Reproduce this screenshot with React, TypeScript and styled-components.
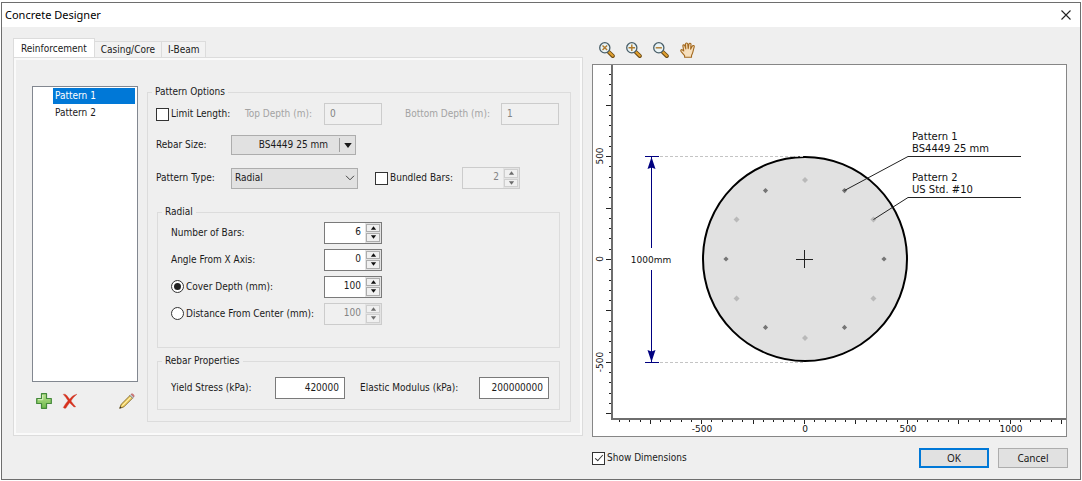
import React, { useState } from "react";
import styled, { createGlobalStyle, css } from "styled-components";

const uiFont = `"DejaVu Sans Condensed", Tahoma, sans-serif`;
const titleFont = `"Noto Sans", "Segoe UI", sans-serif`;

const GlobalStyle = createGlobalStyle`
  *, *::before, *::after { box-sizing: border-box; }
  body { margin: 0; background: #fff; }
  button, input, select, fieldset, legend { font: inherit; color: inherit; margin: 0; }
`;

/* ---------- window frame ---------- */

const Page = styled.div`
  padding: 2px 1px 1px;
`;

const Dialog = styled.main`
  border: 1px solid #6e6e6e;
  background: #efefef;
  font: 10px/14px ${uiFont};
  color: #1a1a1a;
`;

const TitleBar = styled.header`
  display: flex;
  align-items: center;
  justify-content: space-between;
  height: 24px;
  padding: 0 6px 0 3px;
  background: #fff;
`;

const Title = styled.h1`
  margin: 0;
  font: 11px/16px ${titleFont};
  color: #000;
`;

const IconButton = styled.button`
  display: block;
  width: 16px;
  height: 16px;
  padding: 0;
  border: 0;
  background: none;

  svg { display: block; }
`;

const Body = styled.div`
  display: grid;
  grid-template-columns: minmax(570px, 6fr) minmax(0, 5fr);
  gap: 9px;
  padding: 11px 13px 11px 11px;
`;

/* ---------- tabs ---------- */

const TabColumn = styled.div`
  display: flex;
  flex-direction: column;
`;

const TabStrip = styled.div`
  display: flex;
  align-items: flex-end;
  height: 19px;
`;

const Tab = styled.button<{ $active?: boolean }>`
  height: 16px;
  padding: 0 6px;
  border: 1px solid #dcdcdc;
  border-left-width: 0;
  border-bottom: 0;
  background: #f2f2f2;
  line-height: 14px;
  white-space: nowrap;

  ${(p) =>
    p.$active &&
    css`
      height: 20px;
      margin-bottom: -1px;
      padding: 0 7px;
      border-left-width: 1px;
      background: #fff;
      line-height: 16px;
    `}
`;

const TabPanel = styled.section`
  display: flex;
  gap: 9px;
  height: 379px;
  padding: 27px 11px 13px 16px;
  border: 1px solid #dcdcdc;
  box-shadow: inset 0 0 0 2px #fafafa;
`;

/* ---------- pattern list ---------- */

const ListColumn = styled.div`
  display: flex;
  flex-direction: column;
  width: 106px;
  margin-left: 2px;
  padding-top: 1px;
`;

const PatternList = styled.ul`
  display: flex;
  flex-direction: column;
  gap: 1px;
  height: 296px;
  margin: 0;
  padding: 1px 2px 1px 20px;
  border: 1px solid #828790;
  background: #fff;
  list-style: none;
`;

const PatternItem = styled.button<{ $selected: boolean }>`
  display: block;
  width: 100%;
  height: 16px;
  padding: 0 2px;
  border: 0;
  background: ${(p) => (p.$selected ? "#0078d7" : "transparent")};
  color: ${(p) => (p.$selected ? "#fff" : "#1a1a1a")};
  text-align: left;
  line-height: 16px;
`;

const ListActions = styled.div`
  display: flex;
  gap: 10px;
  padding: 11px 3px 0 4px;

  button:last-child { margin-left: auto; }
`;

/* ---------- form parts ---------- */

const Group = styled.fieldset`
  min-width: 0;
  padding: 0;
  border: 1px solid #dcdcdc;
`;

const OptionsGroup = styled(Group)`
  flex: 1;
  padding: 2px 10px 0 8px;
`;

const Legend = styled.legend`
  margin-left: -4px;
  padding: 0 3px;
`;

const NestedGroup = styled(Group)`
  margin-left: 1px;

  > ${Legend} { margin-left: -9px; }
`;

const RadialGroup = styled(NestedGroup)`
  margin-top: 12px;
  padding: 0 10px 20px 13px;
`;

const PropertiesGroup = styled(NestedGroup)`
  margin-top: 6px;
  padding: 6px 10px 7px 13px;
`;

const Row = styled.div<{ $height: number }>`
  display: flex;
  align-items: center;
  height: ${(p) => p.$height}px;
`;

const FormGrid = styled.div`
  display: grid;
  grid-template-columns: 153px 58px;
  grid-auto-rows: 27px;
  align-items: center;
`;

const Label = styled.label<{ $width?: number; $muted?: boolean }>`
  flex: none;
  width: ${(p) => (p.$width ? `${p.$width}px` : "auto")};
  color: ${(p) => (p.$muted ? "#a3a3a3" : "inherit")};
  white-space: nowrap;
`;

const BottomDepthLabel = styled(Label)`
  margin-left: 23px;
`;

const ModulusLabel = styled(Label)`
  margin-left: 15px;
`;

const Choice = styled.label<{ $width?: number }>`
  display: flex;
  flex: none;
  align-items: center;
  gap: 2px;
  width: ${(p) => (p.$width ? `${p.$width}px` : "auto")};
  white-space: nowrap;
`;

const CheckBox = styled.input.attrs({ type: "checkbox" })`
  appearance: none;
  display: grid;
  place-items: center;
  flex: none;
  width: 13px;
  height: 13px;
  border: 1px solid #333;
  background: #fff;

  &:checked::after {
    content: "";
    width: 4px;
    height: 8px;
    margin-bottom: 2px;
    border: solid #333;
    border-width: 0 1px 1px 0;
    transform: rotate(42deg);
  }
`;

const Radio = styled.input.attrs({ type: "radio" })`
  appearance: none;
  display: grid;
  place-items: center;
  flex: none;
  width: 13px;
  height: 13px;
  border: 1px solid #333;
  border-radius: 50%;
  background: #fff;

  &:checked::after {
    content: "";
    width: 7px;
    height: 7px;
    border-radius: 50%;
    background: #222;
  }
`;

const TextBox = styled.input<{ $width: number; $right?: boolean }>`
  flex: none;
  width: ${(p) => p.$width}px;
  height: 22px;
  padding: 0 5px 2px;
  border: 1px solid #7a7a7a;
  border-radius: 0;
  background: #fff;
  text-align: ${(p) => (p.$right ? "right" : "left")};

  &:disabled {
    border-color: #cccccc;
    background: #f0f0f0;
    color: #838383;
  }
`;

const SpinFrame = styled.div<{ $disabled?: boolean }>`
  display: flex;
  flex: none;
  width: 58px;
  height: 22px;
  border: 1px solid ${(p) => (p.$disabled ? "#cccccc" : "#7a7a7a")};
  background: ${(p) => (p.$disabled ? "#f0f0f0" : "#fff")};
`;

const SpinInput = styled.input`
  flex: 1;
  min-width: 0;
  padding: 0 4px 2px 0;
  border: 0;
  background: none;
  text-align: right;

  &:disabled { color: #838383; }
`;

const SpinButtons = styled.div`
  display: grid;
  grid-template-rows: 1fr 1fr;
  gap: 1px;
  width: 16px;
  padding: 1px;
  background: #e3e3e3;
`;

const SpinButton = styled.button`
  display: grid;
  place-items: center;
  min-height: 0;
  padding: 0;
  border: 1px solid #adadad;
  background: #f0f0f0;
  color: #111;

  &:disabled {
    border-color: #cfcfcf;
    color: #6d6d6d;
  }
`;

const MenuButton = styled.button`
  display: grid;
  grid-template-columns: 1fr 15px;
  align-items: center;
  width: 125px;
  height: 20px;
  padding: 0;
  border: 1px solid #adadad;
  background: #e1e1e1;

  span {
    padding-right: 11px;
    border-right: 1px solid #a0a0a0;
    text-align: right;
  }

  svg { justify-self: center; }
`;

const SelectFrame = styled.div`
  display: grid;
  flex: none;
  align-items: center;
  width: 127px;
  margin-right: 17px;

  > * { grid-area: 1 / 1; }

  svg {
    justify-self: end;
    margin-right: 3px;
    pointer-events: none;
  }
`;

const Select = styled.select`
  appearance: none;
  height: 21px;
  padding: 0 3px;
  border: 1px solid #adadad;
  border-radius: 0;
  background: #e1e1e1;
`;

/* ---------- preview ---------- */

const PreviewColumn = styled.section`
  display: flex;
  flex-direction: column;
  min-width: 0;
`;

const Toolbar = styled.div`
  display: flex;
  gap: 11px;
  height: 26px;
  padding: 4px 7px;
`;

const PlotFrame = styled.div`
  border: 1px solid #868686;
  background: #fff;

  svg {
    display: block;
    width: 100%;
    height: auto;
  }
`;

const Footer = styled.footer`
  display: flex;
  align-items: center;
  gap: 9px;
  margin: 11px -1px 0 0;

  > label { margin-right: auto; }
`;

const PushButton = styled.button<{ $primary?: boolean }>`
  width: 70px;
  height: 20px;
  padding: 0;
  border: ${(p) => (p.$primary ? "2px solid #0078d7" : "1px solid #adadad")};
  background: #e1e1e1;
  font-family: ${titleFont};
`;

/* ---------- icons ---------- */

const Caret = ({ up, width = 7, height = 4 }: { up?: boolean; width?: number; height?: number }) => (
  <svg width={width} height={height} viewBox="0 0 8 4" aria-hidden="true">
    <path d={up ? "M1 4 4 0 7 4z" : "M1 0h6L4 4z"} fill="currentColor" />
  </svg>
);

const Magnifier = ({ sign }: { sign: string }) => (
  <svg width="16" height="16" viewBox="0 0 16 16" aria-hidden="true">
    <path d="M9.6 9.8 13.8 14" stroke="#6b4a14" strokeWidth="4" strokeLinecap="round" />
    <path d="M10.2 10.2 13.8 13.8" stroke="#e0a030" strokeWidth="2.2" strokeLinecap="round" />
    <circle cx="5.8" cy="5.8" r="5.1" fill="#eaf4f6" stroke="#4a5f69" strokeWidth="1.3" />
    <path d={sign} stroke="#b07a2c" strokeWidth="1.4" fill="none" />
  </svg>
);

const Hand = () => (
  <svg width="16" height="16" viewBox="0 0 16 16" aria-hidden="true">
    <path
      d="M4.6 15.3v-1.6L1.2 9.6C.2 8.2 1.3 7.1 2.6 8l1.2 1L2.900 4.200C2.600 2.700 4.300 2.300 4.800 3.700l1 3.200-.3-4.700C5.500.6 7.500.5 7.700 2l.5 4.700.7-4.500c.3-1.500 2.200-1.200 2.100.3l-.4 4.700 1.700-3.100c.7-1.200 2.300-.5 1.900.8-.6 2-.9 3.900-1.500 5.800-.4 1.200-.9 1.900-1.200 2.900v1.700z"
      fill="#f6dfbd"
      stroke="#a3691f"
      strokeWidth="1.1"
      strokeLinejoin="round"
    />
  </svg>
);

const PlusIcon = () => (
  <svg width="16" height="16" viewBox="0 0 16 16" aria-hidden="true">
    <defs>
      <linearGradient id="plusFill" x1="0" y1="0" x2="0" y2="1">
        <stop offset="0" stopColor="#b9e08f" />
        <stop offset="1" stopColor="#6fbb4c" />
      </linearGradient>
    </defs>
    <path
      d="M5.500.7h5v4.800h4.800v5h-4.800v4.800h-5v-4.800H.7v-5h4.800z"
      fill="url(#plusFill)"
      stroke="#44893a"
      strokeWidth="1.2"
      strokeLinejoin="round"
    />
    <path d="M6.700 2v4.700H2" stroke="#dcf2c4" fill="none" />
  </svg>
);

const DeleteIcon = () => (
  <svg width="16" height="16" viewBox="0 0 16 16" aria-hidden="true">
    <path
      d="M1.200 1.300C3 .8 4 1.400 5.200 3.100L7.600 6.200C9.500 3.800 11.600 1.800 15 1.200 12.700 3 10.500 5.300 9 8c1.500 2 3 4 4.700 5.800-1.400.5-2.200 0-3-1L7.600 9.700C6.200 11.700 4.900 13.500 3.800 15.200c-1 .3-1.900 0-2.500-.8C2.600 12 4.200 9.800 6 7.700 4.600 5.400 3 3.200 1.200 1.300z"
      fill="#d9301c"
      stroke="#c8483a"
      strokeWidth=".4"
    />
  </svg>
);

const PencilIcon = () => (
  <svg width="16" height="16" viewBox="0 0 16 16" aria-hidden="true">
    <path d="M.7 15.300 2.200 11.300 11 2.500l2.600 2.600-8.800 8.800z" fill="#f3d56b" stroke="#7d6225" strokeWidth=".9" strokeLinejoin="round" />
    <path d="M3.300 12.700 12.200 3.700" stroke="#fff0b0" strokeWidth="1" />
    <path d="M11 2.500 12.200 1.300 14.800 3.900 13.600 5.100z" fill="#c9ced2" stroke="#80868a" strokeWidth=".6" />
    <path d="M12.200 1.300c1-1.400 3.800.9 2.600 2.600z" fill="#e08080" stroke="#b35a5a" strokeWidth=".6" />
    <path d="M.5 15.500 1.200 13.400 2.600 14.800z" fill="#333" />
  </svg>
);

const CloseIcon = () => (
  <svg width="16" height="16" viewBox="0 0 16 16" aria-hidden="true">
    <path d="M3.500 3.500l9 9m0-9l-9 9" stroke="#222" strokeWidth="1.100" />
  </svg>
);

/* ---------- spinner ---------- */

type SpinnerProps = { id: string; label?: string; value: number; disabled?: boolean };

const Spinner = ({ id, label, value, disabled }: SpinnerProps) => {
  const [current, setCurrent] = useState(value);
  return (
    <SpinFrame $disabled={disabled}>
      <SpinInput
        id={id}
        aria-label={label}
        value={current}
        disabled={disabled}
        onChange={(e) => setCurrent(Number(e.target.value) || 0)}
      />
      <SpinButtons>
        <SpinButton type="button" aria-label="Increase" disabled={disabled} onClick={() => setCurrent(current + 1)}>
          <Caret up />
        </SpinButton>
        <SpinButton type="button" aria-label="Decrease" disabled={disabled} onClick={() => setCurrent(current - 1)}>
          <Caret />
        </SpinButton>
      </SpinButtons>
    </SpinFrame>
  );
};

/* ---------- cross-section drawing ---------- */

// The drawing's origin is the pile centre; SCALE is pixels per millimetre.
const SCALE = 0.2056;
const PILE_RADIUS = 102;
const BAR_RADIUS = 79;

const range = (from: number, to: number, step: number) =>
  Array.from({ length: Math.floor((to - from) / step) + 1 }, (_, i) => from + i * step);

const PlotText = styled.text`
  font-family: "DejaVu Sans", Verdana, sans-serif;
  font-size: 9px;
  fill: #111;
`;

const CalloutText = styled(PlotText)`
  font-size: 10px;
`;

const BarRing = ({ start, size, color }: { start: number; size: number; color: string }) => (
  <g fill={color}>
    {range(start, start + 300, 60).map((deg) => {
      const a = (deg * Math.PI) / 180;
      const x = BAR_RADIUS * Math.cos(a);
      const y = -BAR_RADIUS * Math.sin(a);
      return (
        <path key={deg} d={`M${x - size} ${y}L${x} ${y - size}L${x + size} ${y}L${x} ${y + size}z`} />
      );
    })}
  </g>
);

const Plot = ({ dimensions }: { dimensions: boolean }) => (
  <svg viewBox="-212 -194 473 371" role="img" aria-label="Pile cross-section">
    <circle r={PILE_RADIUS} fill="#e1e1e1" stroke="#000" strokeWidth="2" />

    <BarRing start={0} size={2.6} color="#757575" />
    <BarRing start={30} size={3} color="#b9b9b9" />

    <g stroke="#222" shapeRendering="crispEdges">
      <path d="M-9 .5H8M-.5-9V9" />
    </g>

    <path d="M-193-194V160H261" fill="none" stroke="#6e6e6e" strokeWidth="1.500" shapeRendering="crispEdges" />
    <g stroke="#222" shapeRendering="crispEdges">
      {range(-750, 900, 50).map((v) => {
        const y = Math.round(-v * SCALE) + 0.5;
        return <path key={v} d={`M${v % 250 ? -196 : -199} ${y}H-194`} />;
      })}
      {range(-900, 1250, 50).map((v) => {
        const x = Math.round(v * SCALE) - 0.5;
        return <path key={v} d={`M${x} 161V${v % 250 ? 163 : 165}`} />;
      })}
    </g>
    {[500, 0, -500].map((v) => (
      <PlotText key={v} textAnchor="middle" transform={`translate(-202 ${Math.round(-v * SCALE)}) rotate(-90)`}>
        {v}
      </PlotText>
    ))}
    {[-500, 0, 500, 1000].map((v) => (
      <PlotText key={v} textAnchor="middle" x={Math.round(v * SCALE)} y="173">
        {v}
      </PlotText>
    ))}

    {dimensions && (
      <g>
        <path d="M-145-102.500H0M-145 103.500H0" stroke="#c4c4c4" strokeDasharray="3 2" />
        <path d="M-160-102.500h14M-160 103.500h14M-153.500-102V-11M-153.500 11V103" stroke="#000080" fill="none" />
        <path d="M-153.500-102l-4 12 4-1.500 4 1.500zM-153.500 103l-4-12 4 1.500 4-1.500z" fill="#000080" />
        <PlotText textAnchor="middle" x="-154" y="4">
          1000mm
        </PlotText>
      </g>
    )}

    <g fill="none" stroke="#222">
      <path d="M39.500-68.500 103-102.500H216" />
      <path d="M68.500-39.500 103-61.500H216" />
    </g>
    <CalloutText x="107" y="-119">Pattern 1</CalloutText>
    <CalloutText x="107" y="-107">BS4449 25 mm</CalloutText>
    <CalloutText x="107" y="-78">Pattern 2</CalloutText>
    <CalloutText x="107" y="-66">US Std. #10</CalloutText>
  </svg>
);

/* ---------- page ---------- */

export default function App() {
  const [selected, setSelected] = useState("Pattern 1");
  const [showDimensions, setShowDimensions] = useState(true);

  return (
    <Page>
      <GlobalStyle />
      <Dialog>
        <TitleBar>
          <Title>Concrete Designer</Title>
          <IconButton type="button" aria-label="Close">
            <CloseIcon />
          </IconButton>
        </TitleBar>

        <Body>
          <TabColumn>
            <TabStrip role="tablist">
              <Tab type="button" role="tab" aria-selected="true" $active>
                Reinforcement
              </Tab>
              <Tab type="button" role="tab" aria-selected="false">
                Casing/Core
              </Tab>
              <Tab type="button" role="tab" aria-selected="false">
                I-Beam
              </Tab>
            </TabStrip>

            <TabPanel role="tabpanel">
              <ListColumn>
                <PatternList>
                  {["Pattern 1", "Pattern 2"].map((name) => (
                    <li key={name}>
                      <PatternItem type="button" $selected={name === selected} onClick={() => setSelected(name)}>
                        {name}
                      </PatternItem>
                    </li>
                  ))}
                </PatternList>
                <ListActions>
                  <IconButton type="button" aria-label="Add pattern">
                    <PlusIcon />
                  </IconButton>
                  <IconButton type="button" aria-label="Delete pattern">
                    <DeleteIcon />
                  </IconButton>
                  <IconButton type="button" aria-label="Edit pattern">
                    <PencilIcon />
                  </IconButton>
                </ListActions>
              </ListColumn>

              <OptionsGroup>
                <Legend>Pattern Options</Legend>

                <Row $height={26}>
                  <Choice $width={89}>
                    <CheckBox />
                    Limit Length:
                  </Choice>
                  <Label $width={79} $muted htmlFor="top-depth">
                    Top Depth (m):
                  </Label>
                  <TextBox id="top-depth" $width={58} defaultValue="0" disabled />
                  <BottomDepthLabel $width={96} $muted htmlFor="bottom-depth">
                    Bottom Depth (m):
                  </BottomDepthLabel>
                  <TextBox id="bottom-depth" $width={58} defaultValue="1" disabled />
                </Row>

                <Row $height={36}>
                  <Label as="span" $width={75} id="rebar-size">
                    Rebar Size:
                  </Label>
                  <MenuButton type="button" aria-labelledby="rebar-size rebar-value">
                    <span id="rebar-value">BS4449 25 mm</span>
                    <Caret width={10} height={5} />
                  </MenuButton>
                </Row>

                <Row $height={30}>
                  <Label $width={75} htmlFor="pattern-type">
                    Pattern Type:
                  </Label>
                  <SelectFrame>
                    <Select id="pattern-type" defaultValue="Radial">
                      <option>Radial</option>
                      <option>Rectangular</option>
                    </Select>
                    <svg width="10" height="6" viewBox="0 0 10 6" aria-hidden="true">
                      <path d="M1 .8 5 4.800 9 .8" fill="none" stroke="#444" />
                    </svg>
                  </SelectFrame>
                  <Choice $width={87}>
                    <CheckBox />
                    Bundled Bars:
                  </Choice>
                  <Spinner id="bundled-bars" label="Bundled bar count" value={2} disabled />
                </Row>

                <RadialGroup>
                  <Legend>Radial</Legend>
                  <FormGrid>
                    <Label htmlFor="bar-count">Number of Bars:</Label>
                    <Spinner id="bar-count" value={6} />
                    <Label htmlFor="angle">Angle From X Axis:</Label>
                    <Spinner id="angle" value={0} />
                    <Choice>
                      <Radio name="placement" defaultChecked />
                      Cover Depth (mm):
                    </Choice>
                    <Spinner id="cover-depth" label="Cover depth" value={100} />
                    <Choice>
                      <Radio name="placement" />
                      Distance From Center (mm):
                    </Choice>
                    <Spinner id="center-distance" label="Distance from center" value={100} disabled />
                  </FormGrid>
                </RadialGroup>

                <PropertiesGroup>
                  <Legend>Rebar Properties</Legend>
                  <Row $height={28}>
                    <Label $width={104} htmlFor="yield-stress">
                      Yield Stress (kPa):
                    </Label>
                    <TextBox id="yield-stress" $width={70} $right defaultValue="420000" />
                    <ModulusLabel $width={119} htmlFor="elastic-modulus">
                      Elastic Modulus (kPa):
                    </ModulusLabel>
                    <TextBox id="elastic-modulus" $width={70} $right defaultValue="200000000" />
                  </Row>
                </PropertiesGroup>
              </OptionsGroup>
            </TabPanel>
          </TabColumn>

          <PreviewColumn>
            <Toolbar>
              <IconButton type="button" aria-label="Zoom extents">
                <Magnifier sign="M3.500 3.500l4.600 4.600m0-4.600L3.500 8.100" />
              </IconButton>
              <IconButton type="button" aria-label="Zoom in">
                <Magnifier sign="M2.500 5.800h6.600M5.800 2.500v6.600" />
              </IconButton>
              <IconButton type="button" aria-label="Zoom out">
                <Magnifier sign="M2.700 5.800h6.200" />
              </IconButton>
              <IconButton type="button" aria-label="Pan">
                <Hand />
              </IconButton>
            </Toolbar>
            <PlotFrame>
              <Plot dimensions={showDimensions} />
            </PlotFrame>
            <Footer>
              <Choice>
                <CheckBox checked={showDimensions} onChange={(e) => setShowDimensions(e.target.checked)} />
                Show Dimensions
              </Choice>
              <PushButton type="button" $primary>
                OK
              </PushButton>
              <PushButton type="button">Cancel</PushButton>
            </Footer>
          </PreviewColumn>
        </Body>
      </Dialog>
    </Page>
  );
}
